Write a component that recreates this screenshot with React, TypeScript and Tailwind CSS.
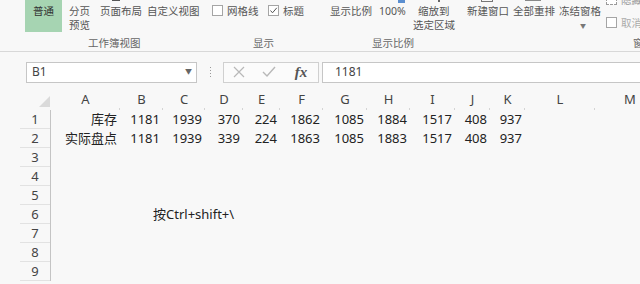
import React from 'react';

const cols = [
  { k: 'A', w: 69 }, { k: 'B', w: 43 }, { k: 'C', w: 42 }, { k: 'D', w: 38 },
  { k: 'E', w: 37 }, { k: 'F', w: 43 }, { k: 'G', w: 44 }, { k: 'H', w: 43 },
  { k: 'I', w: 45 }, { k: 'J', w: 35 }, { k: 'K', w: 35 }, { k: 'L', w: 70 },
  { k: 'M', w: 70 },
];

const data: string[][] = [
  ['库存', '1181', '1939', '370', '224', '1862', '1085', '1884', '1517', '408', '937'],
  ['实际盘点', '1181', '1939', '339', '224', '1863', '1085', '1883', '1517', '408', '937'],
];

const font = { fontFamily: '"Noto Sans", "Noto Sans CJK SC", sans-serif' };

function Box({ checked, dashed }: { checked?: boolean; dashed?: boolean }) {
  return (
    <span className={`inline-flex shrink-0 w-[11px] h-[11px] bg-white items-center justify-center border ${dashed ? 'border-dashed border-[#9a9a9a]' : 'border-[#a5a5a5]'}`}>
      {checked && (
        <svg width="9" height="9" viewBox="0 0 9 9">
          <path d="M1.5 4.5 L3.5 6.8 L7.8 1.8" fill="none" stroke="#555" strokeWidth="1" />
        </svg>
      )}
    </span>
  );
}

function Ribbon() {
  return (
    <div className="h-[52px] bg-[#f8f8f8] border-b border-[#d8d8d8] text-[10.5px] leading-[14px] text-[#555] whitespace-nowrap">
      <div className="flex h-[36px]">
        <div className="w-[25px] shrink-0" />
        <div className="w-[37px] shrink-0 h-[32px] bg-[#a6d4b2] text-center pt-[4px] text-[#333]">普通</div>
        <div className="w-[38px] shrink-0 pl-[7px] pt-[4px]">
          分页<br />预览
        </div>
        <div className="w-[47px] shrink-0 pt-[4px] relative">
          <div className="absolute left-[12px] top-0 w-[8px] h-[1px] bg-[#555]" />
          页面布局
        </div>
        <div className="w-[63px] shrink-0 pt-[4px]">自定义视图</div>
        <div className="w-[55px] shrink-0 pt-[4px] pl-[2px] flex items-start gap-[4px]">
          <span className="mt-[1px] flex"><Box /></span>网格线
        </div>
        <div className="w-[63px] shrink-0 pt-[4px] pl-[3px] flex items-start gap-[4px]">
          <span className="mt-[1px] flex"><Box checked /></span>标题
        </div>
        <div className="w-[49px] shrink-0 pt-[4px] pl-[2px]">显示比例</div>
        <div className="w-[35px] shrink-0 pt-[4px] pl-[2px] relative">
          <div className="absolute left-[21px] top-0 w-[7px] h-[3px] bg-[#5b8fd0]" />
          100%
        </div>
        <div className="w-[53px] shrink-0 pt-[4px] relative">
          <div className="absolute left-[26px] top-0 w-[2px] h-[2px] bg-[#666]" />
          <div className="pl-[6px]">缩放到</div>
          <div className="pl-[1px]">选定区域</div>
        </div>
        <div className="w-[46px] shrink-0 pt-[4px] pl-[2px] relative">
          <div className="absolute left-[16px] top-0 w-[12px] h-[2px] border-x border-b border-[#777]" />
          新建窗口
        </div>
        <div className="w-[46px] shrink-0 pt-[4px] pl-[2px] relative">
          <div className="absolute left-[14px] top-0 w-[16px] h-[1px] bg-[#888]" />
          全部重排
        </div>
        <div className="w-[47px] shrink-0 pt-[4px] pl-[2px]">
          冻结窗格
          <div className="pl-[21px] text-[6px] leading-[8px] mt-[4px] text-[#777]">▼</div>
        </div>
        <div className="flex-1 relative overflow-hidden">
          <div className="absolute left-[2px] top-[-6px] flex items-start gap-[4px] text-[#999]">
            <Box dashed />
            <span className="mt-[-1px]">隐藏</span>
          </div>
          <div className="absolute left-[2px] top-[17px] flex items-start gap-[4px] text-[#aaa]">
            <Box />
            <span className="mt-[-1px]">取消</span>
          </div>
        </div>
      </div>
      <div className="flex h-[15px] text-[#666]">
        <div className="w-[88px] shrink-0" />
        <div className="w-[165px] shrink-0">工作簿视图</div>
        <div className="w-[119px] shrink-0">显示</div>
        <div className="w-[261px] shrink-0">显示比例</div>
        <div className="overflow-hidden">窗</div>
      </div>
    </div>
  );
}

function FormulaBar() {
  return (
    <div className="h-[39px] bg-[#f8f8f8] flex items-center pl-[26px] pt-[1px] text-[12px] text-[#444]">
      <div className="w-[171px] shrink-0 h-[21px] bg-white border border-[#c6c6c6] flex items-center pl-[5px] pr-[4px]">
        <span className="flex-1">B1</span>
        <span className="text-[7px] text-[#666]">▼</span>
      </div>
      <div className="w-[26px] shrink-0 flex justify-center">
        <div className="flex flex-col gap-[2px]">
          <span className="w-[1px] h-[1px] bg-[#999]" />
          <span className="w-[1px] h-[1px] bg-[#999]" />
          <span className="w-[1px] h-[1px] bg-[#999]" />
          <span className="w-[1px] h-[1px] bg-[#999]" />
        </div>
      </div>
      <div className="w-[96px] shrink-0 h-[21px] bg-[#fbfbfb] border border-[#d0d0d0] flex items-center">
        <div className="w-[30px] flex justify-center">
          <svg width="12" height="12" viewBox="0 0 12 12">
            <path d="M1 1 L11 11 M11 1 L1 11" stroke="#b8b8b8" strokeWidth="1.2" />
          </svg>
        </div>
        <div className="w-[30px] flex justify-center">
          <svg width="14" height="12" viewBox="0 0 14 12">
            <path d="M1 6 L5 10 L13 1" fill="none" stroke="#b8b8b8" strokeWidth="1.4" />
          </svg>
        </div>
        <div className="w-[34px] flex justify-center text-[15px] italic font-bold text-[#555]" style={{ fontFamily: '"Liberation Serif", serif' }}>
          fx
        </div>
      </div>
      <div className="w-[3px] shrink-0" />
      <div className="flex-1 h-[21px] bg-white border border-[#c6c6c6] border-r-0 flex items-center pl-[12px]">1181</div>
    </div>
  );
}

function Grid() {
  const rows = [1, 2, 3, 4, 5, 6, 7, 8, 9];
  return (
    <div className="bg-[#f8f8f8] text-[13px] text-[#222] overflow-hidden" style={font}>
      <div className="flex h-[19px] text-[#444]">
        <div className="w-[51px] shrink-0 flex items-end justify-end pr-[1px] pb-[3px]">
          <svg width="11" height="11" viewBox="0 0 11 11">
            <path d="M11 0 L11 11 L0 11 Z" fill="#dadada" />
          </svg>
        </div>
        {cols.map(c => (
          <div key={c.k} style={{ width: c.w }} className="shrink-0 flex flex-col">
            <div className="flex-1 text-center leading-[17px]">{c.k}</div>
            <div className="h-[3px] border-r border-[#d4d4d4]" />
          </div>
        ))}
      </div>
      {rows.map(r => (
        <div key={r} className="flex h-[19px]">
          <div className="w-[51px] shrink-0 pl-[20px] border-r border-[#c4c4c4] text-[#444]">
            <div className="h-[19px] border-b border-[#e2e2e2] text-center leading-[18px]">{r}</div>
          </div>
          {r === 6 ? (
            <div className="pl-[102px] leading-[19px] whitespace-nowrap">按Ctrl+shift+\</div>
          ) : (
            cols.map((c, i) => (
              <div key={c.k} style={{ width: c.w }} className="shrink-0 text-right pr-[3px] leading-[19px] whitespace-nowrap">
                {data[r - 1]?.[i] ?? ''}
              </div>
            ))
          )}
        </div>
      ))}
    </div>
  );
}

export default function App() {
  return (
    <div className="w-[640px] h-[284px] overflow-hidden bg-[#f8f8f8]" style={font}>
      <Ribbon />
      <FormulaBar />
      <Grid />
    </div>
  );
}
